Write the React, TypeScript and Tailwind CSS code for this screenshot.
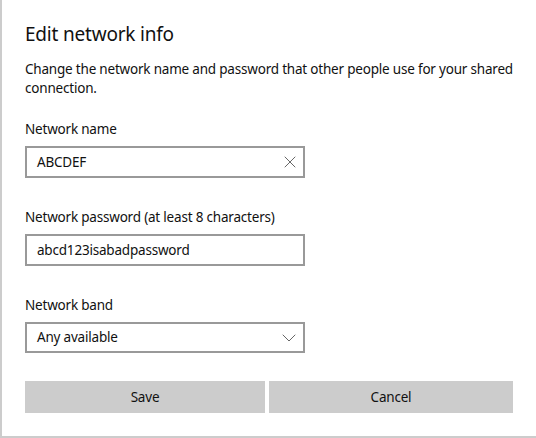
import { X, ChevronDown } from "lucide-react";

function Field({ label, children }: { label: string; children: React.ReactNode }) {
  return (
    <div className="flex flex-col">
      <div className="h-5 leading-5">{label}</div>
      <div className="mt-[7px]">{children}</div>
    </div>
  );
}

export default function App() {
  return (
    <div
      className="w-[536px] h-[438px] bg-white border-l-2 border-b-2 border-[#cccccc] text-[13.5px] tracking-[-0.2px] text-[#111111] px-[23px] pt-[20px] flex flex-col"
      style={{ fontFamily: '"Noto Sans", sans-serif' }}
    >
      <h1 className="text-[19px] tracking-[-0.2px] leading-7 h-7">Edit network info</h1>
      <p className="mt-[12px] leading-[19px]">
        Change the network name and password that other people use for your shared connection.
      </p>

      <div className="mt-[21px]">
        <Field label="Network name">
          <div className="w-[280px] h-[32px] border-2 border-[#999999] flex items-center justify-between pl-[10px] pr-[3px]">
            <span>ABCDEF</span>
            <X size={20} strokeWidth={0.9} className="text-[#333]" />
          </div>
        </Field>
      </div>

      <div className="mt-[29px]">
        <Field label="Network password (at least 8 characters)">
          <div className="w-[280px] h-[32px] border-2 border-[#999999] flex items-center pl-[10px]">
            <span>abcd123isabadpassword</span>
          </div>
        </Field>
      </div>

      <div className="mt-[29px]">
        <Field label="Network band">
          <div className="w-[280px] h-[31px] border-2 border-[#999999] flex items-center justify-between pl-[10px] pr-[2px]">
            <span>Any available</span>
            <ChevronDown size={24} strokeWidth={0.9} className="text-[#555]" />
          </div>
        </Field>
      </div>

      <div className="mt-[28px] flex gap-[4px]">
        <button className="w-[240px] h-[32px] bg-[#cccccc] text-[#111111]">Save</button>
        <button className="w-[244px] h-[32px] bg-[#cccccc] text-[#111111]">Cancel</button>
      </div>
    </div>
  );
}
